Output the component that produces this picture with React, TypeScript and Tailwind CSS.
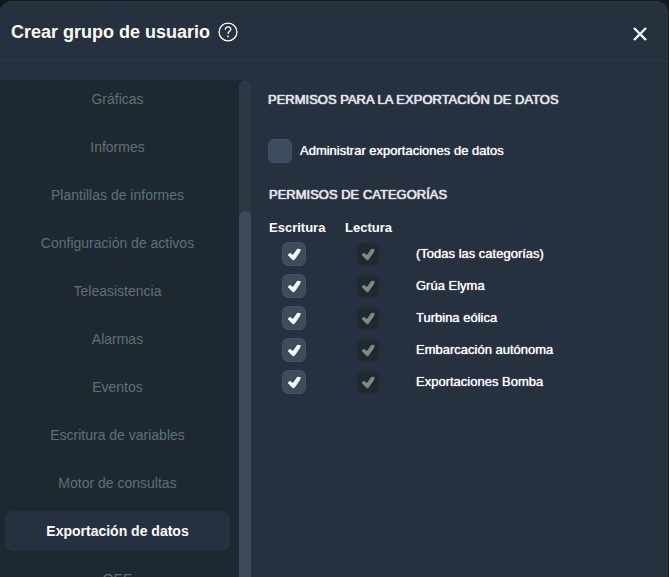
import { useState } from "react";

const sections = [
  "Gráficas",
  "Informes",
  "Plantillas de informes",
  "Configuración de activos",
  "Teleasistencia",
  "Alarmas",
  "Eventos",
  "Escritura de variables",
  "Motor de consultas",
  "Exportación de datos",
  "OEE",
];

const categories = [
  "(Todas las categorías)",
  "Grúa Elyma",
  "Turbina eólica",
  "Embarcación autónoma",
  "Exportaciones Bomba",
];

type CheckProps = {
  id?: string;
  label?: string;
  defaultChecked?: boolean;
  disabled?: boolean;
};

function Check({ id, label, defaultChecked, disabled }: CheckProps) {
  return (
    <span className="grid size-6 shrink-0 place-items-center">
      <input
        id={id}
        type="checkbox"
        aria-label={label}
        defaultChecked={defaultChecked}
        disabled={disabled}
        className="peer col-start-1 row-start-1 size-6 appearance-none rounded-md border border-[#435266] bg-[#3d4b5e] disabled:size-[22px] disabled:border-[#202b34] disabled:bg-[#1f2930]"
      />
      <svg
        viewBox="0 0 24 24"
        aria-hidden="true"
        className="pointer-events-none invisible col-start-1 row-start-1 size-6 fill-white peer-checked:visible peer-disabled:fill-[#858585]"
      >
        <path d="M5.6 13 L8 10.8 L10.9 13 L15.2 7 Q16.6 6.2 18.8 7.6 L17.9 10.2 L13 17.2 L11.2 18.4 L9.6 17 Z" />
      </svg>
    </span>
  );
}

export default function App() {
  const [active, setActive] = useState("Exportación de datos");

  return (
    <div className="h-screen overflow-hidden bg-[#14191e] pt-px pr-px font-['Liberation_Sans',Arial,sans-serif] text-[13px] text-white">
      <div
        role="dialog"
        aria-labelledby="dialog-title"
        className="flex h-full flex-col overflow-hidden rounded-t-xl border-t border-r border-[#2d3945] bg-[#26313f]"
      >
        <header className="flex h-[59px] shrink-0 items-center justify-between border-b border-[#2d3a47] pt-0.5 pr-[19px] pl-[11px]">
          <div className="flex items-center gap-2">
            <h1 id="dialog-title" className="text-lg font-bold">
              Crear grupo de usuario
            </h1>
            <button type="button" aria-label="Ayuda">
              <svg viewBox="0 0 20 20" fill="none" stroke="currentColor" className="size-5">
                <circle cx="10" cy="10" r="8.9" strokeWidth="1.3" />
                <path d="M7.3 7.7 C7.3 4 12.8 4.1 12.8 7.3 C12.8 9.4 10 9.4 10 12" strokeWidth="1.3" />
                <path d="M10 13.6 V15.3" strokeWidth="1.5" />
              </svg>
            </button>
          </div>
          <button type="button" aria-label="Cerrar" className="pt-1">
            <svg viewBox="0 0 16 16" stroke="currentColor" className="size-4">
              <path d="M2 2 L14 14 M14 2 L2 14" strokeWidth="2.4" />
            </svg>
          </button>
        </header>

        <div className="flex min-h-0 flex-1 pt-[19px]">
          <div className="flex w-[251px] shrink-0 overflow-hidden rounded-tr-md bg-[#1e2830]">
            <nav className="-mt-px flex flex-1 flex-col gap-2 overflow-hidden pr-[9px] pl-[5px] text-sm text-[#5e7078]">
              {sections.map((name) => (
                <button
                  key={name}
                  type="button"
                  onClick={() => setActive(name)}
                  className={
                    name === active
                      ? "h-10 shrink-0 rounded-lg bg-[#26313f] font-bold text-white"
                      : "h-10 shrink-0 rounded-lg"
                  }
                >
                  {name}
                </button>
              ))}
            </nav>
            <div className="flex w-3 flex-col rounded-t-md bg-[#2c3843] pt-[131px]">
              <div className="flex-1 rounded-t-md bg-[#3e4a59]" />
            </div>
          </div>

          <main className="min-w-0 flex-1 pt-3 pl-[17px]">
            <h2 className="leading-4 text-[#e4e6e8] [text-shadow:0_0_1px_currentColor,0_0_1px_currentColor]">
              PERMISOS PARA LA EXPORTACIÓN DE DATOS
            </h2>
            <label
              htmlFor="manage"
              className="mt-[31px] flex items-center gap-2 [text-shadow:0_0_1px_currentColor]"
            >
              <Check id="manage" />
              Administrar exportaciones de datos
            </label>

            <section className="mt-6 pl-px">
              <h2 className="leading-4 text-[#e4e6e8] [text-shadow:0_0_1px_currentColor,0_0_1px_currentColor]">
                PERMISOS DE CATEGORÍAS
              </h2>
              <table className="mt-3.5 text-left">
                <thead>
                  <tr className="h-[21px]">
                    <th className="w-[76px] min-w-[76px] p-0 leading-4">Escritura</th>
                    <th className="w-[71px] min-w-[71px] p-0 leading-4">Lectura</th>
                    <td className="p-0" />
                  </tr>
                </thead>
                <tbody>
                  {categories.map((name) => (
                    <tr key={name} className="h-8">
                      <td className="p-0 pl-[13px]">
                        <Check label={"Escritura: " + name} defaultChecked />
                      </td>
                      <td className="p-0 pl-[11px]">
                        <Check label={"Lectura: " + name} defaultChecked disabled />
                      </td>
                      <td className="p-0 [text-shadow:0_0_1px_currentColor]">{name}</td>
                    </tr>
                  ))}
                </tbody>
              </table>
            </section>
          </main>
        </div>
      </div>
    </div>
  );
}
